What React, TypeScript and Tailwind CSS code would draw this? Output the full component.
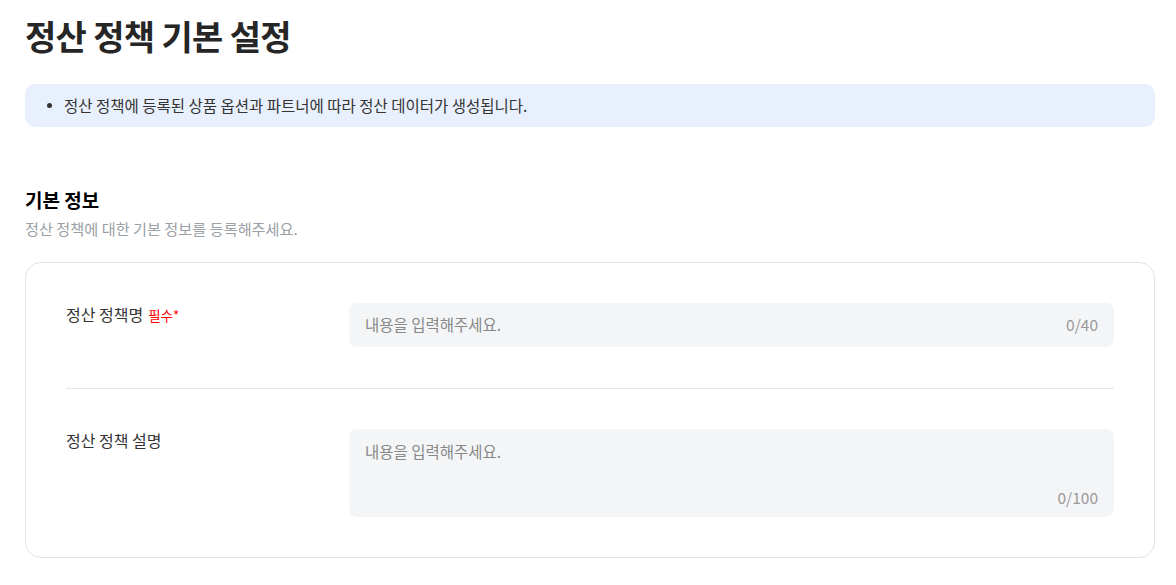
const font = { fontFamily: '"Noto Sans CJK KR", "Noto Sans", sans-serif' };

const Field = ({
  label,
  required,
  max,
  multiline,
}: {
  label: string;
  required?: boolean;
  max: number;
  multiline?: boolean;
}) => (
  <div className="flex">
    <div className="w-[283px] shrink-0 text-[16px] leading-[22px] text-[#333]">
      {label}
      {required && (
        <span className="ml-[5px] text-[13.5px] text-[#ff0000]">필수*</span>
      )}
    </div>
    {multiline ? (
      <div className="flex-1 h-[88px] rounded-lg bg-[#f4f5f7] px-4 pt-[11px] pb-[9px] flex flex-col justify-between text-[15.5px] leading-[22px]">
        <span className="text-[#888]">내용을 입력해주세요.</span>
        <span className="self-end text-[#999]">0/{max}</span>
      </div>
    ) : (
      <div className="flex-1 h-[44px] rounded-lg bg-[#f4f5f7] px-4 flex items-center justify-between text-[15.5px]">
        <span className="text-[#888]">내용을 입력해주세요.</span>
        <span className="text-[#999]">0/{max}</span>
      </div>
    )}
  </div>
);

export default function App() {
  return (
    <div className="min-h-screen bg-white pl-[25px] pr-[21px] pt-[12px] pb-8" style={font}>
      <h1 className="text-[34px] font-bold text-[#262626] tracking-[-0.02em] leading-[48px]">
        정산 정책 기본 설정
      </h1>

      <div className="mt-[24px] h-[43px] rounded-[10px] bg-[#e9f0fd] flex items-center pl-[22px] gap-[12px]">
        <span className="w-[5px] h-[5px] rounded-full bg-[#333]" />
        <span className="text-[15.5px] text-[#333]">
          정산 정책에 등록된 상품 옵션과 파트너에 따라 정산 데이터가 생성됩니다.
        </span>
      </div>

      <h2 className="mt-[59px] text-[19px] font-bold text-black leading-[28px]">
        기본 정보
      </h2>
      <p className="mt-[3px] text-[15.2px] leading-[22px] text-[#9aa0a6]">
        정산 정책에 대한 기본 정보를 등록해주세요.
      </p>

      <div className="mt-[23px] rounded-2xl border border-[#e3e3e3] px-[40px] pt-[40px] pb-[40px]">
        <Field label="정산 정책명" required max={40} />
        <div className="mt-[41px] mb-[40px] h-px bg-[#e5e5e5]" />
        <Field label="정산 정책 설명" max={100} multiline />
      </div>
    </div>
  );
}
